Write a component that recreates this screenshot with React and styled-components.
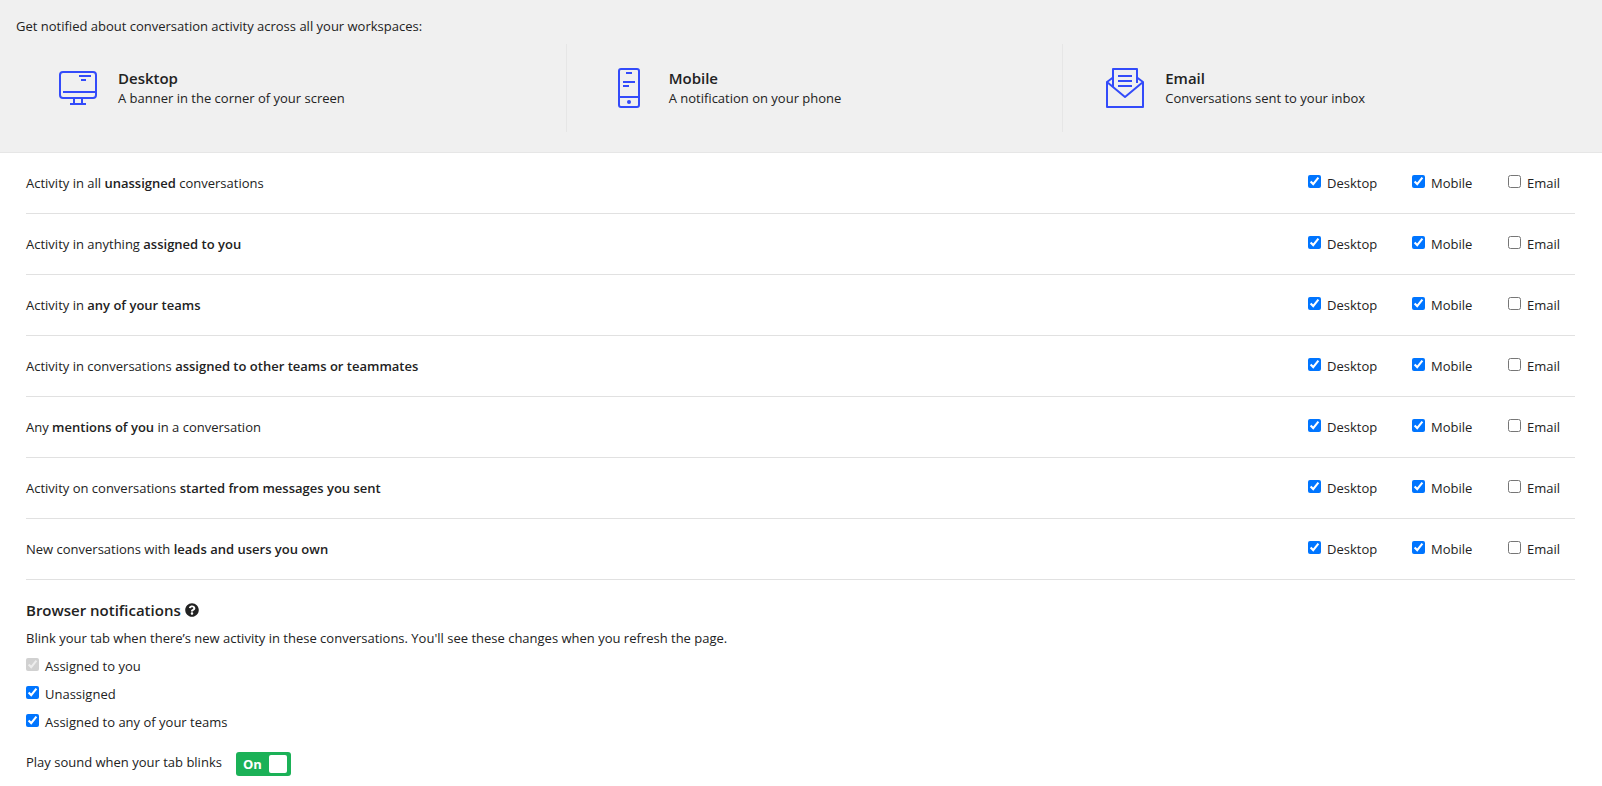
import styled, { createGlobalStyle } from 'styled-components'
import { useState } from 'react'
import { FaQuestionCircle } from 'react-icons/fa'

const GlobalStyle = createGlobalStyle`
    *, *::before, *::after {
        box-sizing: border-box;
    }

    body {
        margin: 0;
        background: #fff;
        color: #222;
        font-family: 'Segoe UI', 'Open Sans', 'Noto Sans', sans-serif;
        font-size: 13px;
        line-height: 20px;
    }
`

const Header = styled.header`
    padding: 16px 16px 20px;
    background: #f0f0f0;
    border-bottom: 1px solid #e6e6e6;
`

const Intro = styled.p`
    margin: 0 0 8px;
`

const Channels = styled.div`
    display: flex;
`

const ChannelCard = styled.section`
    flex: 1 1 auto;
    display: flex;
    align-items: center;
    gap: 20px;
    height: 88px;
    padding-left: 42px;

    & + & {
        border-left: 1px solid #e6e6e6;
    }
`

const ChannelIcon = styled.svg`
    flex: none;
    width: 40px;
    height: 40px;
    fill: none;
    stroke: #334bfa;
    stroke-width: 2;
`

const Title = styled.h2`
    display: flex;
    align-items: center;
    gap: 4px;
    margin: 0;
    font-size: 15px;
    font-weight: 600;
    line-height: 20px;
`

const Main = styled.main`
    padding: 0 27px 9px 26px;
`

const Row = styled.div`
    display: flex;
    align-items: center;
    justify-content: space-between;
    height: 61px;
    border-bottom: 1px solid #e1e1e1;
`

const RowText = styled.span`
    strong {
        font-weight: 600;
    }
`

const RowOptions = styled.div`
    display: grid;
    grid-template-columns: 104px 96px 67px;
`

const CheckLabel = styled.label`
    display: flex;
    align-items: center;
    gap: 6px;
`

const Checkbox = styled.input`
    width: 13px;
    height: 13px;
    margin: 0 0 3px;
`

const Browser = styled.section`
    display: flex;
    flex-direction: column;
    align-items: flex-start;
    gap: 8px;
    padding-top: 20px;
`

const Text = styled.p`
    margin: 0;
`

const SoundRow = styled.div`
    display: flex;
    align-items: flex-start;
    gap: 14px;
    margin-top: 12px;
`

const Toggle = styled.button`
    display: flex;
    flex-direction: ${({ $on }) => ($on ? 'row' : 'row-reverse')};
    align-items: center;
    justify-content: space-between;
    width: 55px;
    height: 24px;
    padding: 0 4px 0 7px;
    border: none;
    border-radius: 3px;
    background: ${({ $on }) => ($on ? '#1bb157' : '#aaa')};
    color: #fff;
    font: inherit;
    font-weight: 700;
`

const Knob = styled.span`
    width: 18px;
    height: 18px;
    border-radius: 2px;
    background: #fff;
`

const DesktopIcon = () => (
    <ChannelIcon viewBox='0 0 40 40' aria-hidden='true'>
        <rect x='2' y='4' width='36' height='26' rx='3' />
        <path d='M5 24H38M21 8H33M23 12H28M16 30V35M24 30V35M12 36H28' />
    </ChannelIcon>
)

const MobileIcon = () => (
    <ChannelIcon viewBox='0 0 40 40' aria-hidden='true'>
        <rect x='10' y='1' width='20' height='38' rx='2' />
        <path d='M17 5H23M14 14H26M14 18H20M10 29H30' />
        <circle cx='20' cy='34' r='2' fill='#334bfa' stroke='none' />
    </ChannelIcon>
)

const EmailIcon = () => (
    <ChannelIcon viewBox='0 0 40 40' aria-hidden='true'>
        <path d='M8 19V1H32V15M13 8H27M13 13H27M13 18H27' strokeLinejoin='round' />
        <path d='M2 14V39H38V14L20 29ZM2 14L8 9.5M38 14L32 9.5' strokeLinejoin='round' />
    </ChannelIcon>
)

const channels = [
    { name: 'Desktop', text: 'A banner in the corner of your screen', Icon: DesktopIcon },
    { name: 'Mobile', text: 'A notification on your phone', Icon: MobileIcon },
    { name: 'Email', text: 'Conversations sent to your inbox', Icon: EmailIcon },
]

const activities = [
    { id: 'unassigned', text: <>Activity in all <strong>unassigned</strong> conversations</> },
    { id: 'you', text: <>Activity in anything <strong>assigned to you</strong></> },
    { id: 'teams', text: <>Activity in <strong>any of your teams</strong></> },
    { id: 'others', text: <>Activity in conversations <strong>assigned to other teams or teammates</strong></> },
    { id: 'mentions', text: <>Any <strong>mentions of you</strong> in a conversation</> },
    { id: 'started', text: <>Activity on conversations <strong>started from messages you sent</strong></> },
    { id: 'owned', text: <>New conversations with <strong>leads and users you own</strong></> },
]

const Check = ({ id, children, ...rest }) => (
    <CheckLabel htmlFor={id}>
        <Checkbox id={id} type='checkbox' {...rest} />
        {children}
    </CheckLabel>
)

const ActivityRow = ({ id, children }) => (
    <Row role='group' aria-labelledby={`${id}-text`}>
        <RowText id={`${id}-text`}>{children}</RowText>
        <RowOptions>
            {channels.map(({ name }) => (
                <Check key={name} id={`${id}-${name}`} defaultChecked={name !== 'Email'}>{name}</Check>
            ))}
        </RowOptions>
    </Row>
)

export default function App() {

    const [sound, setSound] = useState(true)

    return(
        <>
            <GlobalStyle />
            <Header>
                <Intro>Get notified about conversation activity across all your workspaces:</Intro>
                <Channels>
                    {channels.map(({ name, text, Icon }) => (
                        <ChannelCard key={name}>
                            <Icon />
                            <div>
                                <Title>{name}</Title>
                                <Text>{text}</Text>
                            </div>
                        </ChannelCard>
                    ))}
                </Channels>
            </Header>
            <Main>
                {activities.map(({ id, text }) => (
                    <ActivityRow key={id} id={id}>{text}</ActivityRow>
                ))}
                <Browser>
                    <Title>Browser notifications <FaQuestionCircle size={14} /></Title>
                    <Text>Blink your tab when there’s new activity in these conversations. You'll see these changes when you refresh the page.</Text>
                    <Check id='blink-you' defaultChecked disabled>Assigned to you</Check>
                    <Check id='blink-unassigned' defaultChecked>Unassigned</Check>
                    <Check id='blink-teams' defaultChecked>Assigned to any of your teams</Check>
                    <SoundRow>
                        <label htmlFor='sound'>Play sound when your tab blinks</label>
                        <Toggle
                            id='sound'
                            type='button'
                            role='switch'
                            aria-checked={sound}
                            $on={sound}
                            onClick={() => setSound(!sound)}
                        >
                            {sound ? 'On' : 'Off'}
                            <Knob />
                        </Toggle>
                    </SoundRow>
                </Browser>
            </Main>
        </>
    )
}
